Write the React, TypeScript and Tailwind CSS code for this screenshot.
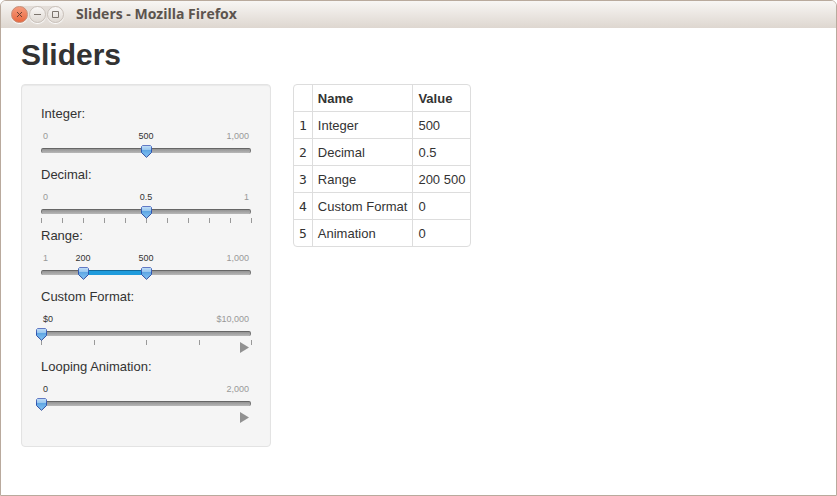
import { useState } from "react";

type SliderProps = {
  id: string;
  label: string;
  min: number;
  max: number;
  step: number;
  values: number[];
  format?: (n: number) => string;
  ticks?: number;
  playable?: boolean;
  onChange: (values: number[]) => void;
};

const group = (n: number) => n.toLocaleString("en-US");

function Pointer() {
  return (
    <svg width="11" height="13" viewBox="0 0 11 13" className="block" aria-hidden="true">
      <defs>
        <linearGradient id="pointer-fill" x1="0" y1="0" x2="0" y2="1">
          <stop offset="0" stopColor="#c3dff7" />
          <stop offset="0.4" stopColor="#92c3ee" />
          <stop offset="0.42" stopColor="#5fa6e3" />
          <stop offset="1" stopColor="#86c6f6" />
        </linearGradient>
        <linearGradient id="pointer-edge" x1="0" y1="0" x2="0" y2="1">
          <stop offset="0" stopColor="#6279c4" />
          <stop offset="0.4" stopColor="#2f57b2" />
          <stop offset="1" stopColor="#2a4596" />
        </linearGradient>
      </defs>
      <path
        d="M1.5 .5H9.5L10.5 1.5V7.5L5.5 12.3L.5 7.5V1.5Z"
        fill="url(#pointer-fill)"
        stroke="url(#pointer-edge)"
      />
    </svg>
  );
}

function Slider({ id, label, min, max, step, values, format = group, ticks = 0, playable, onChange }: SliderProps) {
  const percent = (v: number) => ((v - min) / (max - min)) * 100;
  const positions = values.map((v) => Math.round(percent(v)));
  const ranged = values.length === 2;

  return (
    <div>
      <label htmlFor={id} className="mb-1.5 block text-[13px] leading-5">
        {label}
      </label>
      <div className="relative flex h-3 justify-between px-0.5 text-[9px] leading-3 text-[#999]">
        <span className={positions[0] === 0 ? "invisible" : ""}>{format(min)}</span>
        <span>{format(max)}</span>
        {values.map((v, i) => (
          <span
            key={i}
            className={`absolute top-0 text-[#333] ${positions[i] === 0 ? "ml-0.5" : "-translate-x-1/2"}`}
            style={{ left: `${positions[i]}%` }}
          >
            {format(v)}
          </span>
        ))}
      </div>
      <div className="relative mt-1.5 h-[5px] rounded-[2px] border-x border-t border-x-[#777] border-t-[#666] bg-linear-to-b from-[#949494] to-[#b8b8b8]">
        {ranged && (
          <div
            className="absolute -top-px h-[5px] border-t border-[#12699a] bg-[#1f9bdc]"
            style={{ left: `${positions[0]}%`, right: `${100 - positions[1]}%` }}
          />
        )}
      </div>
      <div className="relative -mt-[5px] h-[5px]">
        {Array.from({ length: ticks }, (_, i) => (
          <span
            key={i}
            className="absolute top-[9px] h-[5px] w-px bg-[#999]"
            style={{ left: `${(i * 100) / (ticks - 1)}%` }}
          />
        ))}
        {positions.map((p, i) => (
          <span key={i} className="absolute -top-[3px] -ml-[5px]" style={{ left: `${p}%` }}>
            <Pointer />
          </span>
        ))}
        {values.map((v, i) => (
          <input
            key={i}
            id={i === 0 ? id : `${id}-upper`}
            aria-label={i === 0 ? undefined : `${label} upper value`}
            type="range"
            min={min}
            max={max}
            step={step}
            value={v}
            onChange={(e) => {
              const next = [...values];
              next[i] = Number(e.target.value);
              onChange(ranged ? next.sort((a, b) => a - b) : next);
            }}
            className={`absolute inset-x-0 -top-1 m-0 h-3.5 w-full cursor-pointer opacity-0 ${
              ranged ? "pointer-events-none [&::-webkit-slider-thumb]:pointer-events-auto" : ""
            }`}
          />
        ))}
      </div>
      {playable ? (
        <div className="flex h-[21px] justify-end pt-1.5 pr-0.5">
          <button type="button" aria-label={`Play ${label}`} className="h-[11px] w-[9px] cursor-pointer">
            <svg width="9" height="11" viewBox="0 0 9 11" className="block" aria-hidden="true">
              <path d="M0 0L9 5.5L0 11Z" fill="#919191" />
            </svg>
          </button>
        </div>
      ) : (
        <div className="h-3" />
      )}
    </div>
  );
}

function TitleBar() {
  const round =
    "flex size-[17px] items-center justify-center rounded-full border shadow-[0_1px_1px_#ffffff]";
  return (
    <header className="flex h-[27px] items-center rounded-t-[5px] bg-linear-to-b from-[#f8f6f4] to-[#ded7d0] pl-2.5">
      <div className="flex gap-px rounded-full bg-[#e3ddd8]">
        <button type="button" aria-label="Close" className={`${round} border-[#c98c74] bg-linear-to-b from-[#f59a7b] to-[#e9683f]`}>
          <svg width="7" height="7" viewBox="0 0 7 7" aria-hidden="true">
            <path d="M1 1L6 6M6 1L1 6" stroke="#6b4132" />
          </svg>
        </button>
        <button type="button" aria-label="Minimize" className={`${round} border-[#c9c1ba] bg-linear-to-b from-[#faf8f7] to-[#dfd9d3]`}>
          <svg width="7" height="7" viewBox="0 0 7 7" aria-hidden="true">
            <path d="M0 3.5H7" stroke="#7d756e" />
          </svg>
        </button>
        <button type="button" aria-label="Maximize" className={`${round} border-[#c9c1ba] bg-linear-to-b from-[#faf8f7] to-[#dfd9d3]`}>
          <svg width="7" height="7" viewBox="0 0 7 7" aria-hidden="true">
            <path d="M.5 .5H6.5V6.5H.5Z" fill="none" stroke="#7d756e" />
          </svg>
        </button>
      </div>
      <span className="mb-0.5 ml-3 font-['Open_Sans','Noto_Sans',sans-serif] text-[14px] leading-5 font-bold text-[#5c544e]">
        Sliders - Mozilla Firefox
      </span>
    </header>
  );
}

export default function App() {
  const [integer, setInteger] = useState([500]);
  const [decimal, setDecimal] = useState([0.5]);
  const [range, setRange] = useState([200, 500]);
  const [custom, setCustom] = useState([0]);
  const [animation, setAnimation] = useState([0]);

  const rows = [
    { name: "Integer", value: integer[0] },
    { name: "Decimal", value: decimal[0] },
    { name: "Range", value: range.join(" ") },
    { name: "Custom Format", value: custom[0] },
    { name: "Animation", value: animation[0] },
  ];
  const heading = "border-l border-[#ddd] px-[5px] pt-[5px] pb-[3px]";
  const cell = "border-t border-l border-[#ddd] px-[5px] pt-[5px] pb-[3px]";

  return (
    <div className="flex min-h-screen flex-col rounded-t-md border border-[#b9aa9d] bg-white font-['Liberation_Sans',Arial,sans-serif] text-[13px] text-[#333]">
      <TitleBar />
      <main className="px-5 pt-[7px] pb-5">
        <h1 className="mb-[9px] text-[30px] leading-10 font-bold">Sliders</h1>
        <div className="grid grid-cols-[250px_1fr] items-start gap-[22px]">
          <form className="rounded-[4px] border border-[#e3e3e3] bg-[#f5f5f5] p-[19px] shadow-[inset_0_1px_1px_rgba(0,0,0,0.05)]">
            <Slider id="integer" label="Integer:" min={0} max={1000} step={1} values={integer} onChange={setInteger} />
            <Slider id="decimal" label="Decimal:" min={0} max={1} step={0.1} ticks={11} values={decimal} onChange={setDecimal} />
            <Slider id="range" label="Range:" min={1} max={1000} step={1} values={range} onChange={setRange} />
            <Slider
              id="custom"
              label="Custom Format:"
              min={0}
              max={10000}
              step={2500}
              ticks={5}
              format={(n) => `$${group(n)}`}
              values={custom}
              playable
              onChange={setCustom}
            />
            <Slider id="animation" label="Looping Animation:" min={0} max={2000} step={10} values={animation} playable onChange={setAnimation} />
          </form>
          <table className="border-separate border-spacing-0 justify-self-start rounded-[4px] border border-[#ddd] text-left leading-[18px]">
            <thead>
              <tr>
                <th className="px-[5px]" />
                <th className={heading}>Name</th>
                <th className={heading}>Value</th>
              </tr>
            </thead>
            <tbody>
              {rows.map((row, i) => (
                <tr key={row.name}>
                  <td className="border-t border-[#ddd] px-[5px] pt-[5px] pb-[3px] font-['DejaVu_Sans_Mono',monospace]">{i + 1}</td>
                  <td className={cell}>{row.name}</td>
                  <td className={cell}>{row.value}</td>
                </tr>
              ))}
            </tbody>
          </table>
        </div>
      </main>
    </div>
  );
}
